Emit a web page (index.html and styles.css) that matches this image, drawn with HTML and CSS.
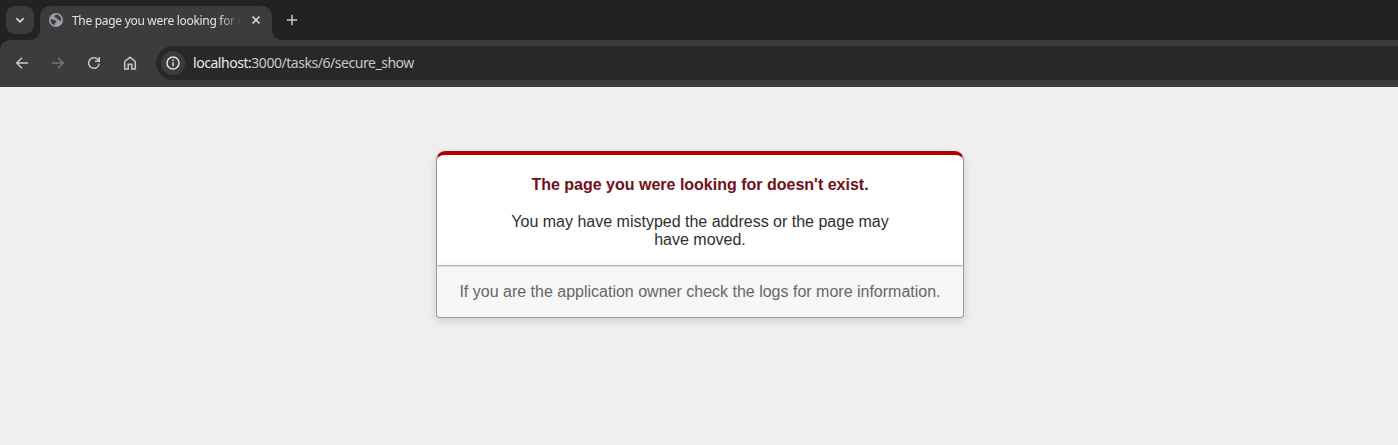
FILE: index.html
```html
<!DOCTYPE html>
<html lang="en">
<head>
<meta charset="utf-8">
<title>The page you were looking for doesn't exist (404)</title>
<link rel="stylesheet" href="styles.css">
</head>
<body>
<header class="browser">
  <div class="tabstrip">
    <button class="tab-search" aria-label="Search tabs">
      <svg width="12" height="12" viewBox="0 0 12 12"><path d="M2.300 4.200 6 7.900l3.700-3.700" class="stroke"/></svg>
    </button>
    <div class="tab">
      <svg class="favicon" width="14" height="14" viewBox="0 0 14 14"><circle cx="7" cy="7" r="7" fill="#9aa0a6"/><path d="M7.300 1.600C5.700 2 5.300 3.200 5.600 4.400L7.600 4.600 8 6.300 10 6.600 10.400 8.200 12.300 7.600A5.500 5.500 0 0 0 7.300 1.600ZM1.600 6.300 5.500 6.800 7.500 8.400 7.200 9.600 5.800 10 5.600 12.200A5.500 5.500 0 0 1 1.600 6.300Z" fill="#3c3c3c"/></svg>
      <span class="tab-title">The page you were looking for d</span>
      <svg class="close" width="12" height="12" viewBox="0 0 12 12"><path d="M2.500 2.500l7 7M9.500 2.500l-7 7" class="stroke"/></svg>
    </div>
    <svg class="new-tab" width="12" height="12" viewBox="0 0 12 12"><path d="M6 .8v10.400M.8 6h10.400" class="stroke"/></svg>
  </div>
  <div class="toolbar">
    <nav class="controls">
      <svg width="16" height="16" viewBox="0 0 16 16"><path d="M14 8H2.800M8 2.700 2.700 8 8 13.300" class="stroke"/></svg>
      <svg class="disabled" width="16" height="16" viewBox="0 0 16 16"><path d="M2 8h11.200M8 2.700 13.300 8 8 13.300" class="stroke"/></svg>
      <svg width="16" height="16" viewBox="0 0 16 16"><path d="M13.200 8.500A5.300 5.300 0 1 1 12.300 5L13.300 6.200M13.300 2v4.300H9" class="stroke"/></svg>
      <svg width="16" height="16" viewBox="0 0 16 16"><path d="M2.700 14V6.500L8 2.300l5.300 4.200V14H9.800V9.300H6.200V14Z" class="stroke"/></svg>
    </nav>
    <div class="omnibox">
      <span class="site-info">
        <svg width="14" height="14" viewBox="0 0 14 14"><circle cx="7" cy="7" r="6" class="stroke"/><path d="M7 6.300v4M7 3.600v1.500" class="stroke"/></svg>
      </span>
      <span class="url"><span class="host">localhost:</span>3000/tasks/6/secure_show</span>
    </div>
  </div>
</header>
<main class="dialog">
  <div class="message">
    <h1>The page you were looking for doesn't exist.</h1>
    <p>You may have mistyped the address or the page may have moved.</p>
  </div>
  <p class="hint">If you are the application owner check the logs for more information.</p>
</main>
</body>
</html>
```
FILE: styles.css
```css
* { box-sizing: border-box; }

body {
  margin: 0;
  background: #efefef;
  color: #2e2f30;
  font-family: Arial, "Liberation Sans", sans-serif;
  text-align: center;
  overflow: hidden;
}

svg { display: block; flex: none; }
.stroke { fill: none; stroke: currentColor; stroke-width: 1.5; }

.browser {
  height: 87px;
  overflow: hidden;
  background: #202322;
  color: #c7c7c7;
  font-family: "Noto Sans", "Open Sans", sans-serif;
  text-align: left;
}

.tabstrip { display: flex; height: 40px; padding: 6px 6px 0; }

.tab-search {
  display: grid;
  place-items: center;
  width: 28px;
  height: 28px;
  padding: 0;
  border: 0;
  border-radius: 9px;
  background: #3c3c3c;
  color: #e3e3e3;
}

.tab {
  position: relative;
  display: flex;
  align-items: center;
  width: 232px;
  height: 34px;
  margin-left: 6px;
  padding: 0 10px 6px 9px;
  border-radius: 10px 10px 0 0;
  background: #3c3c3c;
  color: #e3e3e3;
}

/* Concave feet joining the tab to the toolbar */
.tab::before,
.tab::after {
  content: "";
  position: absolute;
  bottom: 0;
  width: 10px;
  height: 10px;
}
.tab::before { left: -10px; background: radial-gradient(circle at 0 0, transparent 9.5px, #3c3c3c 10.5px); }
.tab::after { right: -10px; background: radial-gradient(circle at 100% 0, transparent 9.5px, #3c3c3c 10.5px); }

.tab-title {
  width: 172px;
  margin-left: 9px;
  padding-top: 2px;
  font-size: 12px;
  letter-spacing: -0.3px;
  line-height: 18px;
  white-space: nowrap;
  -webkit-mask-image: linear-gradient(90deg, #000 146px, transparent 170px);
  mask-image: linear-gradient(90deg, #000 146px, transparent 170px);
}

.close { margin-left: auto; }
.new-tab { margin: 8px 0 0 14px; }

.toolbar {
  display: flex;
  align-items: center;
  height: 47px;
  padding: 0 0 1px 14px;
  border-radius: 10px 0 0;
  background: #3c3c3c;
}

.controls { display: flex; gap: 20px; margin-right: 18px; }
.disabled { color: #757575; }

.omnibox {
  display: flex;
  flex: 1;
  align-items: center;
  height: 34px;
  padding-left: 5px;
  border-radius: 17px 0 0 17px;
  background: #282828;
}

.site-info {
  display: grid;
  place-items: center;
  width: 24px;
  height: 24px;
  border-radius: 50%;
  background: #3c3c3c;
  color: #e3e3e3;
}

.url { margin-left: 8px; font-size: 14px; letter-spacing: -0.46px; line-height: 20px; }
.host { color: #e8e8e8; }

.dialog { width: 528px; margin: 64px auto 0; transform: translateX(1px); }

.message {
  padding: 7px 12% 0;
  border: 1px solid #999;
  border-top: 4px solid #b00100;
  border-bottom-color: #bbb;
  border-radius: 9px 9px 0 0;
  background: #fff;
  box-shadow: 0 3px 8px rgba(50, 50, 50, 0.17);
}

.message h1 {
  margin: 0.67em 0;
  color: #730e15;
  font-size: 16px;
  line-height: 1.5em;
}
.message p { margin: 16px 0; }

.hint {
  margin: 0 0 16px;
  padding: 16px;
  border: 1px solid #999;
  border-top-color: #dadada;
  border-radius: 0 0 4px 4px;
  background: #f7f7f7;
  color: #666;
  box-shadow: 0 3px 8px rgba(50, 50, 50, 0.17);
}
```
